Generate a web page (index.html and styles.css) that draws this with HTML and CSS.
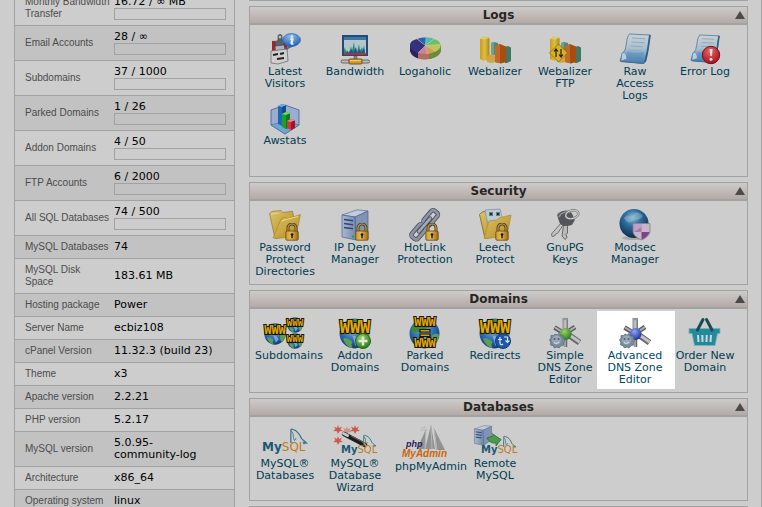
FILE: index.html
```html
<!DOCTYPE html>
<html lang="en">
<head>
<meta charset="utf-8">
<title>cPanel X</title>
<link rel="stylesheet" href="styles.css">
</head>
<body>
<svg class="defs" aria-hidden="true">
  <defs>
    <linearGradient id="gFolder" x1="0" y1="0" x2="1" y2="1"><stop offset="0" stop-color="#d9c46c"/><stop offset="1" stop-color="#b98a1c"/></linearGradient>
    <linearGradient id="gLock" x1="0" x2="1"><stop offset="0" stop-color="#cf9a2c"/><stop offset=".4" stop-color="#e0bd5a"/><stop offset="1" stop-color="#a56a0c"/></linearGradient>
    <linearGradient id="gPage" x1="0" y1="0" x2="0" y2="1"><stop offset="0" stop-color="#cbd2d6"/><stop offset=".5" stop-color="#a9bfd0"/><stop offset="1" stop-color="#3c79b0"/></linearGradient>
    <linearGradient id="gServer" x1="0" x2="1"><stop offset="0" stop-color="#a9b9d2"/><stop offset="1" stop-color="#7188b0"/></linearGradient>
    <linearGradient id="gYellow" x1="0" x2="1"><stop offset="0" stop-color="#cf9c10"/><stop offset=".5" stop-color="#d9bf4c"/><stop offset="1" stop-color="#b0860c"/></linearGradient>
    <linearGradient id="gSteel" x1="0" x2="1"><stop offset="0" stop-color="#8a8a8e"/><stop offset=".5" stop-color="#c9c9cc"/><stop offset="1" stop-color="#6e6e72"/></linearGradient>
    <radialGradient id="gGlobe" cx=".45" cy=".35" r=".65"><stop offset="0" stop-color="#7fb2dc"/><stop offset=".6" stop-color="#2a68b4"/><stop offset="1" stop-color="#123a7c"/></radialGradient>
    <radialGradient id="gSphere" cx=".45" cy=".3" r=".7"><stop offset="0" stop-color="#8fbad4"/><stop offset=".4" stop-color="#2f6f9e"/><stop offset="1" stop-color="#0b2c4c"/></radialGradient>
    <radialGradient id="gInfo" cx=".45" cy=".25" r=".8"><stop offset="0" stop-color="#8fbfe8"/><stop offset="1" stop-color="#1656b0"/></radialGradient>
    <radialGradient id="gRed" cx=".45" cy=".3" r=".7"><stop offset="0" stop-color="#e06a6a"/><stop offset="1" stop-color="#a80f1c"/></radialGradient>
    <radialGradient id="gGreen" cx=".4" cy=".3" r=".7"><stop offset="0" stop-color="#9ccf6c"/><stop offset="1" stop-color="#2b7d1c"/></radialGradient>
    <radialGradient id="gBlue" cx=".4" cy=".3" r=".7"><stop offset="0" stop-color="#8fa4ee"/><stop offset="1" stop-color="#1d36a0"/></radialGradient>

    <symbol id="lock" viewBox="0 0 14 18">
      <path d="M3 9V5a4 4 0 0 1 8 0v4" fill="none" stroke="#55431a" stroke-width="3"/>
      <path d="M3 9V5a4 4 0 0 1 8 0v4" fill="none" stroke="#b79d60" stroke-width="1.2"/>
      <rect x=".8" y="8" width="12.4" height="9.2" rx="1.2" fill="url(#gLock)" stroke="#6b470c" stroke-width=".8"/>
      <circle cx="7" cy="11.6" r="1.4" fill="#2a1c06"/><path d="M6.3 12h1.4v3.2H6.3z" fill="#2a1c06"/>
    </symbol>
    <symbol id="globe" viewBox="0 0 30 30">
      <circle cx="15" cy="15" r="14.5" fill="url(#gGlobe)"/>
      <path d="M7 3.500C11 .8 18 0 22 3l-3 3 1 3-5 2-3 4-5-2-4 2C2 9 4 5.500 7 3.500z" fill="#3b8a3a"/>
      <path d="M4 19l5 1 4 3-1 3 1 3C8 28 5 24 4 19zM22 17l4-2 3 1c0 5-2 8-5 10l-2-4z" fill="#5aa050"/>
      <path d="M13 17l4 1 3 4-4 5z" fill="#93bfdf" opacity=".7"/>
    </symbol>
    <symbol id="folder" viewBox="0 0 32 30">
      <path d="M.5 4.500L3 2.500l9-1 2 2 9.500-1.200L25 9v17L6 29.500z" fill="url(#gFolder)" stroke="#96792a" stroke-width=".7"/>
      <path d="M4 29L12 10l4-2 2 2 13.500-4.500L27 27l-19 2.500z" fill="url(#gFolder)" stroke="#a88a30" stroke-width=".7"/>
      <path d="M2 5l8-1" stroke="#e2d596" stroke-width="1"/><path d="M13 12l4-1.500 12-3" fill="none" stroke="#ead98c"/>
    </symbol>
    <symbol id="sheet" viewBox="0 0 32 32">
      <path d="M1 27l4 1 21 1.500-1.500 1.500L2 29z" fill="#1f5a94"/>
      <path d="M10.500 1L31 2c-1 5-1.500 14-4 25l-2 3.500L1 28l2-7 3-4c2-6 1-12 4.500-16z" fill="url(#gPage)" stroke="#4f7593" stroke-width=".8"/>
      <path d="M31 2c-1 5-1.500 15-5 27" fill="none" stroke="#2d628f" stroke-width="1.800"/>
      <path d="M3 20c2-1 4 0 4.500 3l.5 3-6 2z" fill="#b9cfdf" stroke="#4a7ba6" stroke-width=".6"/>
      <path d="M13 5l13 .7M12.500 9l13 .7M11.500 13l12 .7M10.500 17l12 .7" stroke="#8fa9ba" stroke-width="1"/>
      <path d="M8 18c5 2 11 2 17 1l-2 8-15-1z" fill="#4f88b8" opacity=".45"/>
    </symbol>
    <symbol id="server" viewBox="0 0 28 32">
      <path d="M1 6L16 .8 27 2 14 8z" fill="#c0cbdb" stroke="#5c6f92" stroke-width=".7"/>
      <path d="M14 8l13-6v21l-12 8z" fill="#8193b4" stroke="#4d6086" stroke-width=".7"/>
      <path d="M1 6l13 2 1 23L1 28z" fill="url(#gServer)" stroke="#4d6086" stroke-width=".7"/>
      <path d="M3 10.500l9 1.200M3 14.500l9 1.200M3 18.500l9 1.200" stroke="#33466c" stroke-width="1.500"/>
      <circle cx="12" cy="27.500" r="1.200" fill="#3a9a3a"/>
    </symbol>
    <symbol id="bars" viewBox="0 0 32 32">
      <path d="M12 10l3-1 4 1v12h-7z" fill="#4f8874"/><path d="M12 10l3-1v13h-3z" fill="#6da08e"/>
      <path d="M1 6l4-2.500L10.500 5v21L5 28l-4-2z" fill="url(#gYellow)"/><path d="M1 6l4-2.500L10.500 5 6 6.500z" fill="#dccb6a"/>
      <path d="M8 23l4-2 5 2v6l-5 1-4-1z" fill="#cda54a"/>
      <path d="M26 14l3-1 3 1.500V28l-4 2h-2z" fill="#3f7863"/>
      <path d="M16 13l5-2 6 2.500V29l-5 1.500-6-1.500z" fill="#a94c12"/><path d="M16 13l5-2v19.200L16 29z" fill="#c06a26"/>
    </symbol>
    <symbol id="dolphin" viewBox="0 0 18 17">
      <path d="M1 15C.5 9 1 6 1 3c-.5-2 .5-2.300 2-1.500C8 2.500 10 7 11.500 10.500c1 1.500 3 2 5 4.500l-3-.7.8 2" fill="none" stroke="#2d7286" stroke-width="1.200"/>
      <path d="M1 3c3 2 2 5 2.500 7.500l1 2L6.200 10" fill="none" stroke="#2d7286" stroke-width=".9"/>
    </symbol>
    <symbol id="arms" viewBox="0 0 32 32">
      <path d="M5.500 10.500l10 6M26 10l-9 6" stroke="#5d5d63" stroke-width="4.600"/><path d="M6 10.500l10 6M26 10l-9 6" stroke="#b0b0b5" stroke-width="2"/>
      <path d="M19 17.500l11.500 8" stroke="#67676c" stroke-width="6"/><path d="M19 17l11.500 8" stroke="#c3c3c7" stroke-width="3"/>
      <path d="M16.500 20v10" stroke="#6c6c70" stroke-width="3.500"/><path d="M16 20v10" stroke="#b9b9bc" stroke-width="1.300"/>
      <rect x="13.500" y="1" width="5.500" height="14" fill="url(#gSteel)"/><ellipse cx="16.250" cy="2" rx="2.700" ry="1.300" fill="#97979b"/>
    </symbol>
    <symbol id="cog" viewBox="0 0 16 16">
      <path d="M6 1l2 1 2-1.500 1.500 2.300 2.700 0 .2 2.700 1.500 2-1.400 2 0 2.500-2.600.8-1.800 2.200L8 14l-2.600.9-1.400-2.200-2.500-.8.3-2.700L.5 7 2 5l0-2.600 2.700.1z" fill="#7a8b9e" stroke="#56677c" stroke-width=".7"/>
      <circle cx="7.500" cy="7" r="4.500" fill="#98a8b8"/><circle cx="5.500" cy="6" r="1" fill="#4c5c70"/><circle cx="9.500" cy="6" r="1" fill="#4c5c70"/><path d="M5 9.500c1.500 1.500 4 1 5-.5" fill="none" stroke="#dbe4ec"/>
    </symbol>
  </defs>
</svg>

<div class="page">
  <aside class="stats">
    <table>
      <tbody>
        <tr><th scope="row">Monthly Bandwidth Transfer</th><td>16.72 / ∞ MB<div class="meter"></div></td></tr>
        <tr><th scope="row">Email Accounts</th><td>28 / ∞<div class="meter"></div></td></tr>
        <tr><th scope="row">Subdomains</th><td>37 / 1000<div class="meter"></div></td></tr>
        <tr><th scope="row">Parked Domains</th><td>1 / 26<div class="meter"></div></td></tr>
        <tr><th scope="row">Addon Domains</th><td>4 / 50<div class="meter"></div></td></tr>
        <tr><th scope="row">FTP Accounts</th><td>6 / 2000<div class="meter"></div></td></tr>
        <tr><th scope="row">All SQL Databases</th><td>74 / 500<div class="meter"></div></td></tr>
        <tr><th scope="row">MySQL Databases</th><td>74</td></tr>
        <tr><th scope="row">MySQL Disk Space</th><td>183.61 MB</td></tr>
        <tr><th scope="row">Hosting package</th><td>Power</td></tr>
        <tr><th scope="row">Server Name</th><td>ecbiz108</td></tr>
        <tr><th scope="row">cPanel Version</th><td>11.32.3 (build 23)</td></tr>
        <tr><th scope="row">Theme</th><td>x3</td></tr>
        <tr><th scope="row">Apache version</th><td>2.2.21</td></tr>
        <tr><th scope="row">PHP version</th><td>5.2.17</td></tr>
        <tr><th scope="row">MySQL version</th><td>5.0.95-<wbr><span class="keep">community-log</span></td></tr>
        <tr><th scope="row">Architecture</th><td>x86_64</td></tr>
        <tr><th scope="row">Operating system</th><td>linux</td></tr>
      </tbody>
    </table>
  </aside>

  <main class="panels">
    <div class="edge"></div>

    <section class="panel">
      <header><h2>Logs</h2><button type="button" class="fold" aria-label="Collapse Logs"></button></header>
      <div class="items">
        <a class="item" href="#">
          <svg class="icon" viewBox="0 0 32 32">
            <path d="M3 8l16-1-1 15-15 2z" fill="#9d2630"/>
            <path d="M6 8l8-1 2 13-9 2z" fill="#a9b4c0"/>
            <path d="M2 18l16-2 1 12-10 3-7-1z" fill="#cfcfcf" stroke="#6e6e6e" stroke-width=".8"/>
            <path d="M4 22l5-1M11 21l4-1M8 26l7-1" stroke="#222" stroke-width="2"/>
            <path d="M9 3c0-2 4-2 4 0v5l2 1v3l-9 1V9l3-1z" fill="#5a6065" stroke="#33383c" stroke-width=".6"/><circle cx="11" cy="4" r="1.500" fill="#b4b8bc"/>
            <path d="M20 12l-3 5 8-4z" fill="#2f6ab4"/>
            <ellipse cx="22.500" cy="7" rx="9" ry="6.500" fill="url(#gInfo)" stroke="#2463ae" stroke-width=".6"/>
            <circle cx="23" cy="3.600" r="1.300" fill="#e3edf5"/><path d="M21 6h3l-1 5h1.500M22.800 6.500l-1 4.500" fill="none" stroke="#e3edf5" stroke-width="1.300"/>
          </svg><span>Latest Visitors</span></a>
        <a class="item" href="#">
          <svg class="icon" viewBox="0 0 32 32">
            <rect x="3" y="2" width="26" height="21" fill="#254a74"/><rect x="5" y="4" width="22" height="4" fill="#3c76ac"/><rect x="5" y="7" width="22" height="14" fill="#b4c6cc"/>
            <path d="M5 21v-4l1-3 1 5 2-1 1 2 2-7 1 5 2-9 1 9 1-3 1 4 2-8 1 7 2-4 1 4 1-6 1 6v3z" fill="#1f8f66"/>
            <path d="M7 21l1-4 1 3 4-4 1 4 3-6 1 6 3-4 1 4 3-5 1 6z" fill="#2450a8"/>
            <path d="M5 20.500l3-.8 3 1 4-1 3 .6 4-.8 5 .8V22H5z" fill="#b8322a"/>
            <path d="M15 23h3v4h-3z" fill="#8b8f93" stroke="#444" stroke-width=".5"/>
            <rect x="2" y="27" width="28.500" height="3" rx="1.500" fill="#bcbcbc" stroke="#55503f" stroke-width=".8"/>
            <rect x="10" y="26" width="13" height="5" rx="1" fill="#d79a22" stroke="#6b4b10" stroke-width=".9"/><path d="M11 27.500h11" stroke="#ecd07c"/>
          </svg><span>Bandwidth</span></a>
        <a class="item" href="#">
          <svg class="icon" viewBox="0 0 32 32">
            <path d="M1 12c0-1 30-1 31 0v5c-1 12-28 12-30 1z" fill="#7a6a4a"/>
            <path d="M1 12v6c1 4 4 6 8 7.500V19z" fill="#2a2260"/><path d="M9 18l0 7.500c3 1 7 1.200 11 .5v-8z" fill="#b06f62"/><path d="M20 18v8c6-1.200 11-4 12-9v-5z" fill="#668f35"/>
            <path d="M16.500 12.500L9 20C4 18.500 1 15.500 1 12c0-3 3-5 7-6z" fill="#37307c"/>
            <path d="M16.500 12.500L8 6c3-1.200 6-1.500 9-1.500z" fill="#2c62a6"/><path d="M16.500 12.500L17 4.500c3 0 6 .5 8 1.300z" fill="#4fb7b4"/>
            <path d="M16.500 12.500L25 6c3 .8 6 2.800 6.500 5.500z" fill="#6fbe60"/><path d="M16.500 12.500l15-1c.6 3-1.500 5.500-5 7z" fill="#bfc658"/>
            <path d="M16.500 12.500l10 6c-3 1.700-6 2.300-8.500 2.400z" fill="#d59c52"/><path d="M16.500 12.500L18 21c-4 0-6-.3-9-1z" fill="#c583a0"/>
            <path d="M9 20l7.500-7.500L18 21M16.500 12.500l10 6M16.500 12.500l15-1M16.500 12.500L25 6M16.500 12.500l.5-8M16.500 12.500L8 6" fill="none" stroke="#e0dcd4" stroke-width=".4"/>
          </svg><span>Logaholic</span></a>
        <a class="item" href="#"><svg class="icon" viewBox="0 0 32 32"><use href="#bars" width="32" height="32"/></svg><span>Webalizer</span></a>
        <a class="item" href="#">
          <svg class="icon" viewBox="0 0 32 32"><use href="#bars" width="32" height="32"/>
            <path d="M9.500 11l9 9-9 9-9-9z" fill="#d8b128" stroke="#8a6a10" stroke-width=".8"/>
            <path d="M7 24v-7M5 18.500l2-2.500 2 2.500M12 16v7M10 21.500l2 2.500 2-2.500" fill="none" stroke="#2b1f08" stroke-width="1.200"/>
          </svg><span>Webalizer FTP</span></a>
        <a class="item" href="#"><svg class="icon" viewBox="0 0 32 32"><use href="#sheet" width="32" height="32"/></svg><span>Raw Access Logs</span></a>
        <a class="item" href="#">
          <svg class="icon" viewBox="0 0 32 32"><use href="#sheet" y="1" width="32" height="30"/>
            <circle cx="22" cy="22" r="8.700" fill="url(#gRed)" stroke="#7c1018" stroke-width="1"/><path d="M20.500 16h3.200l-.8 7h-1.600z" fill="#e0dada"/><circle cx="22" cy="26.300" r="1.500" fill="#e0dada"/>
          </svg><span>Error Log</span></a>
        <a class="item" href="#">
          <svg class="icon" viewBox="0 0 32 32">
            <path d="M2 8l14-5 14 5v15l-14 9L2 23z" fill="#9aaed0" stroke="#4c689c" stroke-width=".9"/>
            <path d="M2 23l14-4 14 4-14 9z" fill="#6fa6cf" stroke="#3f6c9c" stroke-width=".6"/>
            <path d="M9 4l4-2 4 1.500V22l-4 2-4-2z" fill="#1d68b4"/><path d="M9 4l4-2 4 1.500L13 5z" fill="#74aee0"/><path d="M13 5l4-1.500V22l-4 2z" fill="#124a8c"/>
            <path d="M13 12l4-2 4 1.500V25l-4 2-4-2z" fill="#17a22c"/><path d="M13 12l4-2 4 1.500L17 13z" fill="#7fd07c"/><path d="M17 13l4-1.500V25l-4 2z" fill="#0f7a1e"/>
            <path d="M18 19l4-2 4 1.500V26l-4 2-4-2z" fill="#d43440"/><path d="M18 19l4-2 4 1.500L22 20z" fill="#e68c8c"/><path d="M22 20l4-1.500V26l-4 2z" fill="#a8141e"/>
          </svg><span>Awstats</span></a>
      </div>
    </section>

    <section class="panel">
      <header><h2>Security</h2><button type="button" class="fold" aria-label="Collapse Security"></button></header>
      <div class="items">
        <a class="item" href="#"><svg class="icon" viewBox="0 0 32 32"><use href="#folder" width="32" height="30"/><use href="#lock" x="16" y="14" width="14" height="18"/></svg><span>Password Protect Directories</span></a>
        <a class="item" href="#"><svg class="icon" viewBox="0 0 32 32"><use href="#server" x="2" width="28" height="32"/><use href="#lock" x="16" y="14" width="14" height="18"/></svg><span>IP Deny Manager</span></a>
        <a class="item" href="#">
          <svg class="icon" viewBox="0 0 32 32">
            <g fill="none" transform="rotate(-49 15.500 16)">
              <rect x="-1.500" y="12" width="16" height="8" rx="2.500" stroke="#474c5a" stroke-width="4.400"/><rect x="17" y="12" width="16" height="8" rx="2.500" stroke="#474c5a" stroke-width="4.400"/>
              <rect x="-1.500" y="12" width="16" height="8" rx="2.500" stroke="#8f93a4" stroke-width="2.800"/><rect x="17" y="12" width="16" height="8" rx="2.500" stroke="#8f93a4" stroke-width="2.800"/>
              <path d="M7 16h17" stroke="#474c5a" stroke-width="4.400" stroke-linecap="round"/><path d="M7 16h17" stroke="#a6aab8" stroke-width="2.600" stroke-linecap="round"/>
            </g><use href="#lock" x="16" y="14" width="14" height="18"/>
          </svg><span>HotLink Protection</span></a>
        <a class="item" href="#">
          <svg class="icon" viewBox="0 0 32 32">
            <path d="M.5 5.500L3 3l6-1 2 2 9-1 4 22L6 29.500z" fill="url(#gFolder)" stroke="#7c621e" stroke-width=".8"/>
            <path d="M6 1l15-1 3 12L9 16z" fill="#b9ccd6" stroke="#7c8c98" stroke-width=".7"/>
            <path d="M10 5h4M12 3v4M10.500 3.500l3 3M13.500 3.500l-3 3M17 5h4M19 3v4M17.500 3.500l3 3M20.500 3.500l-3 3" stroke="#1e2830" stroke-width="1"/>
            <path d="M5 29l5-17 8-1 2-2 12-3-4 21-20 2.500z" fill="url(#gFolder)" stroke="#a88a30" stroke-width=".7"/>
            <use href="#lock" x="16" y="14" width="14" height="18"/>
          </svg><span>Leech Protect</span></a>
        <a class="item" href="#">
          <svg class="icon" viewBox="0 0 32 32">
            <path d="M12 14L2.500 25l.5 2.500 2.500-.5 1-2 2-.5 6-9z" fill="#c4c4c4" stroke="#666" stroke-width=".9"/>
            <path d="M14.500 16L13 27l3 3.500 2-2-1-3 1.500-1.500L18.500 16z" fill="#bababa" stroke="#5c5c5c" stroke-width=".9"/>
            <path d="M8 6c3-5 9-5 13-2l5 7-3 5c-5 2-10 1-12-1z" fill="#5e6064"/><circle cx="17" cy="9" r="7.500" fill="#53555a"/><path d="M10 8c2-5 8-6 11-4" fill="none" stroke="#8e9195" stroke-width="1.500"/>
            <ellipse cx="23" cy="5.500" rx="6.500" ry="4" fill="none" stroke="#6b6b6b" stroke-width="2.400" transform="rotate(-15 23 5.500)"/><ellipse cx="23" cy="5.500" rx="6.500" ry="4" fill="none" stroke="#cdcdcd" stroke-width="1.200" transform="rotate(-15 23 5.500)"/>
          </svg><span>GnuPG Keys</span></a>
        <a class="item" href="#">
          <svg class="icon" viewBox="0 0 32 32">
            <ellipse cx="15" cy="29" rx="12" ry="2" fill="#a9a9a9"/><circle cx="15" cy="14.500" r="14.500" fill="url(#gSphere)"/>
            <path d="M5 9c4-4 8-1 10-4s6-1 8 1-3 5-6 5-8 6-12-2z" fill="#9cc0d6" opacity=".45"/>
            <path d="M14 14.500h17V23c-1 4-5 6.500-8.500 8C19 29.500 15 27 14 23z" fill="#c6b6c6" stroke="#8c7c90" stroke-width=".8"/>
            <path d="M22.500 23h8c-1 3.500-4 6-8 7.500z" fill="#7d4489"/><path d="M14.500 15h8v8h-8z" fill="#a57bab"/><path d="M15 15h7.500v3L15 23z" fill="#bfa0c4"/>
          </svg><span>Modsec Manager</span></a>
      </div>
    </section>

    <section class="panel">
      <header><h2>Domains</h2><button type="button" class="fold" aria-label="Collapse Domains"></button></header>
      <div class="items">
        <a class="item" href="#">
          <svg class="icon icon-md" viewBox="0 0 42 32">
            <use href="#globe" x="0" y="6" width="22" height="22"/><use href="#globe" x="23" y="0" width="16" height="16"/><use href="#globe" x="23" y="16" width="16" height="16"/>
            <text class="www www-s" x="11" y="17">WWW</text><text class="www www-xs" x="31" y="9">WWW</text><text class="www www-xs" x="31" y="25">WWW</text>
          </svg><span>Subdomains</span></a>
        <a class="item" href="#">
          <svg class="icon" viewBox="0 0 32 32"><use href="#globe" y="1" width="31" height="31"/><text class="www" x="16" y="16">WWW</text>
            <circle cx="24" cy="24" r="7.500" fill="url(#gGreen)" stroke="#1f6a18"/><path d="M24 19.500v9M19.500 24h9" stroke="#dfe8d8" stroke-width="2.400"/>
          </svg><span>Addon Domains</span></a>
        <a class="item" href="#">
          <svg class="icon" viewBox="0 0 32 32"><use href="#globe" y="1" width="31" height="31"/><text class="www www-s" x="16" y="9">WWW</text><text class="www www-s" x="16" y="30">WWW</text>
            <path d="M11 12.500h10v2.500H11zM11 17H21v2.500H11z" fill="#d8a010" stroke="#1c1608" stroke-width="1.200"/>
          </svg><span>Parked Domains</span></a>
        <a class="item" href="#">
          <svg class="icon" viewBox="0 0 32 32"><use href="#globe" y="1" width="31" height="31"/><text class="www" x="16" y="16">WWW</text>
            <circle cx="24" cy="24" r="7.500" fill="#1c58a8" stroke="#103a7c"/><path d="M21 20v6c0 2 2 2 3 1M19 22.500h4M25 20h3.500v5M26.500 23.500l2 2 2-2" fill="none" stroke="#dbe3ee" stroke-width="1.200"/>
          </svg><span>Redirects</span></a>
        <a class="item" href="#"><svg class="icon" viewBox="0 0 32 32"><use href="#arms" width="32" height="32"/><circle cx="16.500" cy="17" r="6" fill="url(#gGreen)"/><use href="#cog" y="16" width="16" height="16"/></svg><span>Simple DNS Zone Editor</span></a>
        <a class="item item-lit" href="#"><svg class="icon" viewBox="0 0 32 32"><use href="#arms" width="32" height="32"/><circle cx="16.500" cy="17" r="6" fill="url(#gBlue)"/><use href="#cog" y="16" width="16" height="16"/></svg><span>Advanced DNS Zone Editor</span></a>
        <a class="item" href="#">
          <svg class="icon" viewBox="0 0 32 32">
            <path d="M0 11.500h31v5h-2.500L26 28.500H5.500L3 16.500H0z" fill="#238a9c" stroke="#7fb0b8" stroke-width=".8" stroke-linejoin="round"/>
            <path d="M9 18l.5 7M13.300 18l.2 7M17.700 18l-.2 7M22 18l-.5 7" stroke="#cfdadb" stroke-width="2"/>
            <path d="M8.500 13l5.500-10.500M23 13l-5.500-10.500" stroke="#1c4a50" stroke-width="3" stroke-linecap="round"/>
          </svg><span>Order New Domain</span></a>
      </div>
    </section>

    <section class="panel">
      <header><h2>Databases</h2><button type="button" class="fold" aria-label="Collapse Databases"></button></header>
      <div class="items">
        <a class="item" href="#">
          <svg class="icon icon-lg" viewBox="0 0 46 32"><use href="#dolphin" x="28" y="3" width="18" height="17"/><text class="sql" x="0" y="26"><tspan class="my">My</tspan>SQL</text></svg><span>MySQL® Databases</span></a>
        <a class="item" href="#">
          <svg class="icon icon-lg" viewBox="0 0 46 32">
            <path id="star" d="M6 0l1 3 3-1.500L8.500 4.200 11 6 7.500 6.200 6 9 4.800 6.200 1 6l2.500-1.800L2 1.500 5 3z" fill="#cf5a4c"/><use href="#star" x="17"/><use href="#star" y="11"/><use href="#star" x="9" y="1" opacity=".5"/>
            <path d="M12 9l21 11" stroke="#1d1d1d" stroke-width="4.500" stroke-linecap="round"/><path d="M11.500 8.500l4 2" stroke="#c8c8c8" stroke-width="3" stroke-linecap="round"/><path d="M19 11l12 6" stroke="#6c6c6c"/><path d="M31 17l4 5" stroke="#c8a646" stroke-width="1.500"/>
            <use href="#dolphin" x="31" y="9" width="14" height="14"/><text class="sql sql-s" x="9" y="28"><tspan class="my">My</tspan>SQL</text>
          </svg><span>MySQL® Database Wizard</span></a>
        <a class="item" href="#">
          <svg class="icon icon-tall" viewBox="0 0 46 35">
            <path d="M24 4L15 24h8zM29 0l-6 24h10zM32 3l11 22h-9z" fill="#929292"/><path d="M29 0l1 24M32 3l3 22M24 4l-1 20" stroke="#b9b9b9" stroke-width=".9"/><path d="M19 3l5-1M18 5h7" stroke="#a8a8a8" stroke-width=".6"/>
            <text class="php" x="4" y="22">php</text><text class="admin" x="0" y="32">MyAdmin</text>
          </svg><span>phpMyAdmin</span></a>
        <a class="item" href="#">
          <svg class="icon icon-lg" viewBox="0 0 46 32">
            <use href="#server" x="1" y="0" width="20" height="21"/>
            <path d="M15 13l6-2v-1.500l-1-1 9 6-5 6.500v-3c-4 .5-7-1-9-5z" fill="#4b9a4c" stroke="#286a2c" stroke-width=".8"/>
            <use href="#dolphin" x="31" y="10" width="14" height="14"/><text class="sql sql-s" x="9" y="28"><tspan class="my">My</tspan>SQL</text>
          </svg><span>Remote MySQL</span></a>
      </div>
    </section>

    <div class="edge"></div>
  </main>
</div>
</body>
</html>
```
FILE: styles.css
```css
* { box-sizing: border-box; }

body {
  margin: 0;
  background: #cdcdcd;
  font: 11px/12px "DejaVu Sans", Verdana, sans-serif;
  color: #000;
}

.defs { position: absolute; width: 0; height: 0; }

.page {
  display: flex;
  gap: 14px;
  height: 100vh;
  overflow: hidden;
  padding-left: 14px;
}

/* Account statistics */
.stats { flex: 0 0 221px; }

.stats table {
  width: 100%;
  margin-top: -9px;
  border: 1px solid #a2a2a2;
  border-top: 0;
  border-spacing: 0;
}

.stats tr:nth-child(even) { background: #c2c2c2; }

.stats th,
.stats td {
  padding: 5px 8px 5px 0;
  border-bottom: 1px solid #a2a2a2;
  text-align: left;
  vertical-align: middle;
}

.stats th {
  width: 99px;
  padding-right: 4px;
  padding-left: 10px;
  font: 10px/12px "Liberation Sans", Arial, sans-serif;
  color: #4c4c4c;
}

.keep { display: inline-block; }

.meter {
  height: 12px;
  border: 1px solid #a2a2a2;
}

/* Feature panels */
.panels {
  flex: 1;
  display: flex;
  flex-direction: column;
  gap: 5px;
  padding-right: 13px;
  border-right: 1px solid #a2a2a2;
}

.edge {
  flex: none;
  height: 1px;
  background: #a2a2a2;
}

.panel {
  flex: none;
  border: 1px solid #a2a2a2;
}

.panel header {
  display: grid;
  grid-template-columns: 1fr auto 1fr;
  align-items: center;
  height: 18px;
  border-bottom: 2px solid #a2a2a2;
  background: linear-gradient(#cdcbca, #b4aaa7);
}

.panel h2 {
  grid-column: 2;
  margin: 0;
  font-size: 12px;
  line-height: 16px;
  color: #262626;
}

.fold {
  justify-self: end;
  width: 10px;
  height: 8px;
  margin-right: 2px;
  padding: 0;
  border: 0;
  background: #4a4a4a;
  clip-path: polygon(50% 0, 100% 100%, 0 100%);
}

.items {
  display: grid;
  grid-template-columns: repeat(auto-fill, 70px);
  padding: 8px 0 6px;
}

.item {
  position: relative;
  min-height: 68px;
  padding: 0 5px;
  color: #003d52;
  text-align: center;
  text-decoration: none;
}

.item span {
  position: relative;
  display: block;
  margin-top: 1px;
}

.item-lit { color: #004b66; }

.item-lit::before {
  content: "";
  position: absolute;
  inset: -6px -5px -3px -3px;
  background: #fff;
}

.icon {
  position: relative;
  display: block;
  width: 32px;
  height: 32px;
  margin: 0 auto;
  overflow: visible;
}

.icon-md { width: 42px; }
.icon-lg { width: 46px; }
.icon-tall { width: 46px; height: 35px; }

/* Lettering inside the icons */
.www {
  font: bold 17px "DejaVu Sans Mono", monospace;
  text-anchor: middle;
  fill: #dfa80c;
  stroke: #1c1608;
  stroke-width: 2px;
  paint-order: stroke;
}
.www-s { font-size: 12px; }
.www-xs { font-size: 9px; }

.sql { font: 12px "DejaVu Sans", Verdana, sans-serif; fill: #c07a1c; }
.sql-s { font-size: 10px; }
.my { font-weight: bold; fill: #1c5872; }

.php { font: italic bold 9px "Liberation Sans", Arial, sans-serif; fill: #2a1c60; }
.admin { font: italic bold 10px "Liberation Sans", Arial, sans-serif; fill: #cc6608; }
```
